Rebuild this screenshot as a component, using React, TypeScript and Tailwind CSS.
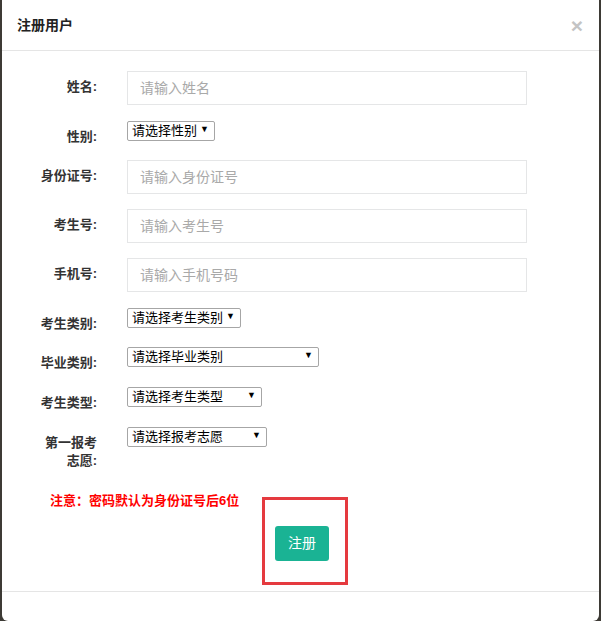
import React from "react";

const font = "font-['Liberation_Sans','Noto_Sans_CJK_SC',sans-serif]";

const Label = ({ children }: { children: React.ReactNode }) => (
  <div className="w-[110px] shrink-0 pr-[15px] pt-[7px] text-right text-[13px] leading-[17px] font-bold text-[#333]">
    {children}
  </div>
);

const TextRow = ({
  label,
  placeholder,
  gap = "mb-[15px]",
}: {
  label: string;
  placeholder: string;
  gap?: string;
}) => (
  <div className={`flex ${gap}`}>
    <Label>{label}</Label>
    <div className="pl-[15px]">
      <input
        className="h-[34px] w-[400px] border border-[#e5e6e7] bg-white px-[12px] text-[14px] outline-none placeholder:text-[#a9a9a9]"
        placeholder={placeholder}
      />
    </div>
  </div>
);

const SelectRow = ({
  label,
  text,
  width,
  gap = "mb-[15px]",
}: {
  label: React.ReactNode;
  text: string;
  width: string;
  gap?: string;
}) => (
  <div className={`flex ${gap}`}>
    <Label>{label}</Label>
    <div className="pl-[15px]">
      <div className={`relative ${width}`}>
        <select className="block h-[20px] w-full appearance-none rounded-[2px] border border-[#a6a6a6] bg-white pl-[4px] text-[13px] leading-[18px] text-black outline-none">
          <option>{text}</option>
        </select>
        <span className="pointer-events-none absolute inset-y-0 right-[6px] flex items-center pb-[2px] text-[9px] text-black">
          ▼
        </span>
      </div>
    </div>
  </div>
);

export default function App() {
  return (
    <div className={`h-[621px] w-[601px] overflow-hidden bg-[#3d3a35] ${font}`}>
      <div className="ml-[2px] flex h-[621px] w-[597px] flex-col rounded-b-[6px] bg-white">
        {/* header */}
        <div className="flex h-[51px] items-center justify-between border-b border-[#e5e5e5] pl-[15px] pr-[16px]">
          <h4 className="text-[14px] font-bold text-[#222]">注册用户</h4>
          <button className="text-[21px] leading-none font-bold text-[#c4c4c4]">×</button>
        </div>

        {/* body */}
        <div className="pt-[20px]">
          <TextRow label="姓名:" placeholder="请输入姓名" gap="mb-[16px]" />
          <SelectRow label="性别:" text="请选择性别" width="w-[88px]" />
          <TextRow label="身份证号:" placeholder="请输入身份证号" />
          <TextRow label="考生号:" placeholder="请输入考生号" />
          <TextRow label="手机号:" placeholder="请输入手机号码" gap="mb-[16px]" />
          <SelectRow label="考生类别:" text="请选择考生类别" width="w-[114px]" />
          <SelectRow label="毕业类别:" text="请选择毕业类别" width="w-[192px]" gap="mb-[16px]" />
          <SelectRow label="考生类型:" text="请选择考生类型" width="w-[135px]" gap="mb-[16px]" />
          <SelectRow
            label={
              <span className="leading-[18px]">
                第一报考
                <br />
                志愿:
              </span>
            }
            text="请选择报考志愿"
            width="w-[140px]"
          />

          <p className="ml-[48px] mt-[22px] text-[13px] leading-[18px] font-bold text-[#ff0000]">
            注意：密码默认为身份证号后6位
          </p>

          <div className="mt-[16px] flex justify-center">
            <div className="relative ml-[3px]">
              <button className="h-[35px] w-[54px] rounded-[3px] bg-[#1ab394] text-[14px] text-white">
                注册
              </button>
              <div className="pointer-events-none absolute left-[-13px] right-[-19px] top-[-29px] bottom-[-24px] border-[3px] border-[#e53a3f]" />
            </div>
          </div>
        </div>

        {/* footer */}
        <div className="mt-[30px] flex-1 border-t border-[#e5e5e5]" />
      </div>
    </div>
  );
}
